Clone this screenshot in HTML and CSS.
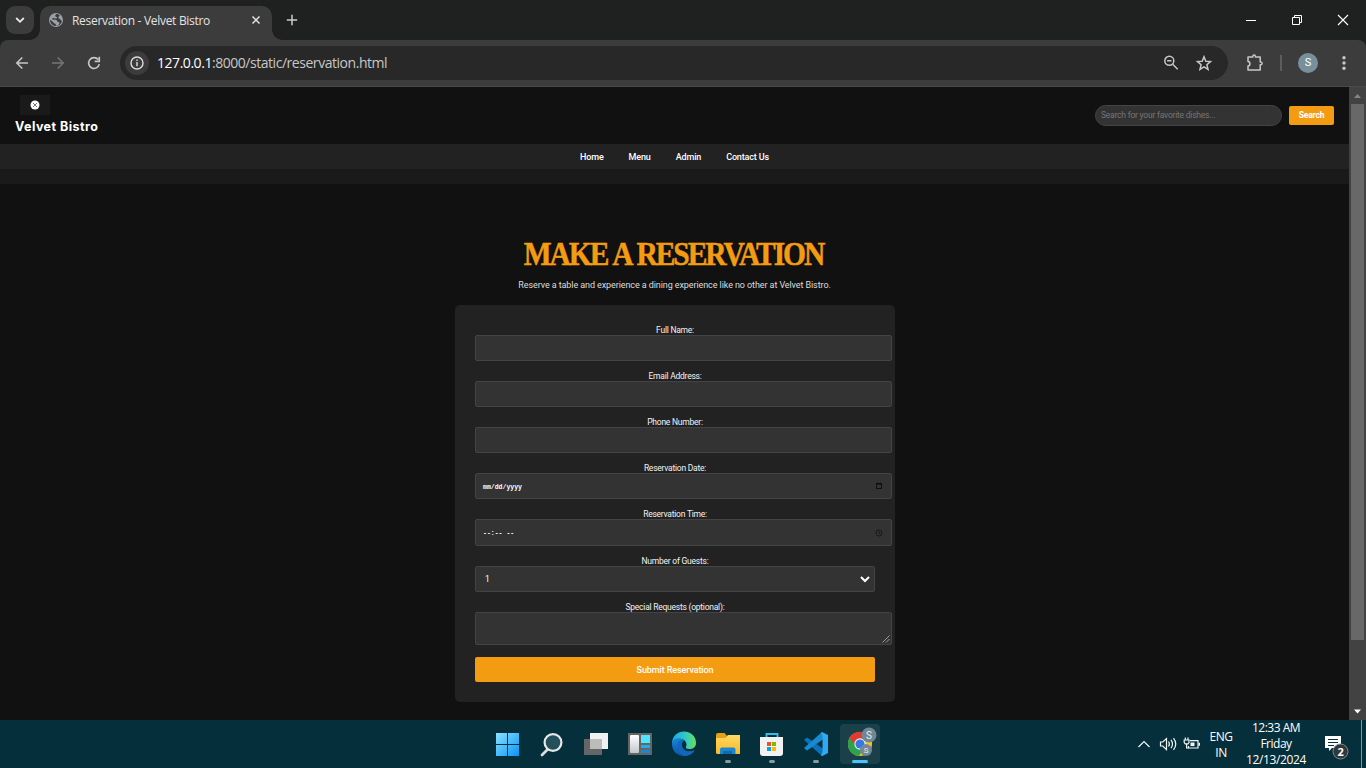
FILE: index.html
```html
<!DOCTYPE html>
<html lang="en">
<head>
<meta charset="utf-8">
<title>Reservation - Velvet Bistro</title>
<link rel="stylesheet" href="styles.css">
</head>
<body>
<div class="tabstrip">
  <div class="tabsearch"><svg width="28" height="28" viewBox="0 0 28 28"><path d="M10.2 12l3.8 3.8 3.8-3.8" fill="none" stroke="#e8e8e8" stroke-width="1.8"/></svg></div>
  <div class="tab">
    <svg class="globe" width="16" height="16" viewBox="0 0 16 16"><circle cx="8" cy="8" r="7" fill="#9aa0a8"/><path d="M9.500 1.800C7 2 6.500 4.400 8.500 5c1.500.6-.5 2-1.500 1.600L5 5.800 4 7.500l3.500.2c2.200.2 1.300 2 3 2.400 1.800.3.600 2.300-.2 3.100l-2.600.8.300-1.800L5.800 11 3.500 8.600 2 8c0 3.300 2.700 6 6 6 2.900 0 5.300-2 5.900-4.800L12 7l-1.700-.8.600-1.900 1-.7z" fill="#3c3c3c"/></svg>
    <span class="tabtitle">Reservation - Velvet Bistro</span>
    <svg class="tabclose" width="10" height="10" viewBox="0 0 10 10"><path d="M1.500 1.500l7 7m0-7l-7 7" stroke="#e3e3e3" stroke-width="1.500"/></svg>
  </div>
  <svg class="newtab" width="12" height="12" viewBox="0 0 12 12"><path d="M6 .8v10.400M.8 6h10.400" stroke="#c9c9c9" stroke-width="1.500"/></svg>
  <div class="wincontrols">
    <svg width="46" height="40" viewBox="0 0 46 40"><path d="M18 20.500h10" stroke="#fff"/></svg>
    <svg width="46" height="40" viewBox="0 0 46 40" fill="none" stroke="#fff"><path d="M18.500 17.500h7v7h-7zM20.500 17v-1.500h7v7H26"/></svg>
    <svg width="46" height="40" viewBox="0 0 46 40"><path d="M18 15l10 10m0-10L18 25" stroke="#fff" stroke-width="1.100"/></svg>
  </div>
</div>
<div class="toolbarwrap"><div class="toolbar">
  <svg width="106" height="46" viewBox="0 0 106 46" fill="none" stroke-width="1.600"><g stroke="#c7c7c7"><path d="M28 23H17M22.300 17.500L16.800 23l5.500 5.500"/><path d="M98.200 19.600a5.400 5.400 0 1 0 1.100 4.600M99.300 16.800v4.600h-4.600"/></g><path d="M52 23h11M57.700 17.500l5.500 5.500-5.500 5.500" stroke="#757575"/></svg>
  <div class="omnibox">
    <div class="info"><svg width="24" height="24" viewBox="0 0 24 24" fill="none" stroke="#dcdcdc" stroke-width="1.400"><circle cx="12" cy="12" r="6"/><path d="M12 11v4.200M12 8.400v1.500"/></svg></div>
    <span class="url">127.0.0.1<span class="path">:8000/static/reservation.html</span></span>
    <svg class="omni-icons" width="52" height="20" viewBox="0 0 52 20" fill="none" stroke="#c7c7c7" stroke-width="1.500"><circle cx="6.300" cy="7.800" r="4.500"/><path d="M4.100 7.800h4.400M9.700 11.200l5 5M41 3.800l1.800 4.400 4.700.4-3.600 3.100 1.100 4.600-4-2.500-4 2.500 1.100-4.600-3.600-3.100 4.700-.4z"/></svg>
  </div>
  <svg class="ext" width="18" height="18" viewBox="0 0 18 18"><path d="M2 3h4.800V2.400a1.300 1.300 0 0 1 2.600 0V3h4.800v5h.5a1.300 1.300 0 0 1 0 2.800h-.5V16H2v-4c2.600-.2 2.600-4.300 0-4.500z" fill="none" stroke="#c7c7c7" stroke-width="1.500" stroke-linejoin="round"/></svg>
  <span class="divider"></span>
  <span class="profile">S</span>
  <svg class="dots" width="6" height="18" viewBox="0 0 6 18" fill="#c7c7c7"><circle cx="3" cy="3.700" r="1.700"/><circle cx="3" cy="9" r="1.700"/><circle cx="3" cy="14.300" r="1.700"/></svg>
</div></div>
<div class="viewport">
  <div class="page">
    <header class="header">
      <div class="brand">
        <svg width="30" height="20" viewBox="0 0 30 20"><path d="M0 0h30v20H0z" fill="#1a1a1a"/><circle cx="15" cy="10" r="4.500" fill="#fff"/><path d="M13 8l4 4m0-4l-4 4" stroke="#555" stroke-width=".8"/></svg>
        <span class="brandname">Velvet Bistro</span>
      </div>
      <div class="searchform"><div class="searchbox">Search for your favorite dishes...</div><div class="searchbtn">Search</div></div>
    </header>
    <nav class="nav"><a>Home</a><a>Menu</a><a>Admin</a><a>Contact Us</a></nav>
    <div class="strip"></div>
    <main class="main">
      <h1 class="title">MAKE A RESERVATION</h1>
      <p class="lead">Reserve a table and experience a dining experience like no other at Velvet Bistro.</p>
      <form class="card">
        <label class="label">Full Name:</label><div class="input"></div>
        <label class="label">Email Address:</label><div class="input"></div>
        <label class="label">Phone Number:</label><div class="input"></div>
        <label class="label">Reservation Date:</label><div class="input"><span class="mono">mm/dd/yyyy</span><svg width="8" height="8" viewBox="0 0 8 8"><path d="M1.500 1.500h5v5h-5z" fill="none" stroke="#080808" stroke-width=".8"/><path d="M1.500 2h5M2.500.7v1M5.500.7v1" stroke="#080808"/></svg></div>
        <label class="label">Reservation Time:</label><div class="input time"><span class="mono">--:-- --</span><svg width="8" height="8" viewBox="0 0 8 8"><path d="M4 2v2.200l1.500.8M7 4a3 3 0 1 1-6 0a3 3 0 1 1 6 0z" fill="none" stroke="#161616" stroke-width=".9"/></svg></div>
        <label class="label">Number of Guests:</label><div class="input select"><span>1</span><svg width="10" height="8" viewBox="0 0 10 8"><path d="M1 2l4 4 4-4" fill="none" stroke="#fff" stroke-width="2"/></svg></div>
        <label class="label">Special Requests (optional):</label><div class="input area"><svg width="8" height="8" viewBox="0 0 8 8"><path d="M.5 7.500l7-7M4 7.500L7.500 4" stroke="#b5b5b5" stroke-width=".8"/></svg></div>
        <div class="submit">Submit Reservation</div>
      </form>
    </main>
  </div>
  <div class="scrollbar">
    <svg width="17" height="17" viewBox="0 0 17 17"><path d="M5 11l3.500-4 3.500 4z" fill="#858585"/></svg>
    <div class="thumb"></div>
    <svg width="17" height="17" viewBox="0 0 17 17"><path d="M5 6.500h7l-3.500 4z" fill="#fff"/></svg>
  </div>
</div>
<div class="taskbar">
  <div class="apps">
    <div class="app"><svg width="40" height="40" viewBox="0 0 40 40"><defs><linearGradient id="win" gradientUnits="userSpaceOnUse" x1="9" y1="9" x2="32" y2="32"><stop stop-color="#8be3ff"/><stop offset="1" stop-color="#0794f5"/></linearGradient></defs><path d="M9 9h11v11H9zM21 9h11v11H21zM9 21h11v11H9zM21 21h11v11H21z" fill="url(#win)"/></svg></div>
    <div class="app"><svg width="40" height="40" viewBox="0 0 40 40"><path d="M16.500 25.500l-5.500 5.500" stroke="#ddd" stroke-width="2.800" stroke-linecap="round"/><circle cx="22" cy="18.500" r="8.400" fill="#24505b" stroke="#e7e9e9" stroke-width="2.200"/></svg></div>
    <div class="app"><svg width="40" height="40" viewBox="0 0 40 40"><path d="M14 9h18v16H14z" fill="#f0f0f0"/><path d="M8 15h18v16H8z" fill="#666"/><path d="M14 15h12v10H14z" fill="#bcbcbc"/></svg></div>
    <div class="app"><svg width="40" height="40" viewBox="0 0 40 40"><defs><linearGradient id="wid" x2="0" y2="1"><stop stop-color="#fff"/><stop offset="1" stop-color="#c3c7c9"/></linearGradient></defs><path d="M8 9h24v22H8z" fill="#656565"/><rect x="10" y="11" width="9" height="18" rx="1" fill="url(#wid)"/><path d="M21 11h9v8h-9z" fill="#4de5ff"/><path d="M21 21h9v3h-9z" fill="#27a9e5"/><path d="M21 26h9v3h-9z" fill="#1688dc"/></svg></div>
    <div class="app"><svg width="40" height="40" viewBox="0 0 40 40"><defs><linearGradient id="edge"><stop stop-color="#1ba8e8"/><stop offset=".55" stop-color="#31c9c6"/><stop offset="1" stop-color="#66e05b"/></linearGradient><linearGradient id="edge2" x2="0" y2="1"><stop stop-color="#1686da"/><stop offset="1" stop-color="#0b53a8"/></linearGradient></defs><path d="M8 20C8 3 32 4 32 19c0 4-3 6-6.500 6-3 0-4-1-3.500-2 2-4-2-9-7-8-4 .8-6 3-7 5z" fill="url(#edge)"/><path d="M8 20c0 7 5 12 12 12 5 0 8.500-2.500 10.500-6-5 2.500-11 1.500-12.500-4-.6-2.500.3-4.500 2-5.500C15 12 8 15 8 20z" fill="url(#edge2)"/><path d="M14 19c-2 5 1 12 7 12.900 4 0 7.500-2 9.500-5.400-6 2.500-13 .5-13-5.500 0-2 1-3.500 2.500-4.500-2.500-1-5 0-6 2.500z" fill="#1267bd"/></svg></div>
    <div class="app"><svg width="40" height="40" viewBox="0 0 40 40"><defs><linearGradient id="fold" x2="0" y2="1"><stop stop-color="#ffd863"/><stop offset="1" stop-color="#f8b928"/></linearGradient></defs><path d="M8 11q0-2 2-2h6.500l2.500 3-2 3H8z" fill="#e6a012"/><path d="M8 14h9l3-3h12v19H9l-1-1z" fill="url(#fold)"/><path d="M12 30v-4.500q0-2 2-2h11.500q2 0 2 2V30z" fill="#1c87d0"/><path d="M15 27h9v3h-9z" fill="#126aae"/></svg><i class="run"></i></div>
    <div class="app"><svg width="40" height="40" viewBox="0 0 40 40"><path d="M14.500 15v-5h11v5" fill="none" stroke="#35bce9" stroke-width="1.900"/><path d="M8 13h23v16q0 3-3 3H11q-3 0-3-3z" fill="#f2f2f2"/><path d="M15 18h4v4h-4z" fill="#f25022"/><path d="M20 18h4v4h-4z" fill="#7fba00"/><path d="M15 23h4v4h-4z" fill="#00a4ef"/><path d="M20 23h4v4h-4z" fill="#ffb900"/></svg><i class="run"></i></div>
    <div class="app"><svg width="40" height="40" viewBox="0 0 40 40"><path d="M8 16l3-2.500L29 26l-3 6z" fill="#0b72ba"/><path d="M8 24l3 2.500L29 14l-3-6z" fill="#168bd2"/><path d="M26 8l6 3v18l-6 3.200-1-1.200 1.500-3V12L25 9z" fill="#2fa9f0"/></svg><i class="run"></i></div>
    <div class="app active"><svg width="40" height="40" viewBox="0 0 40 40"><circle cx="20" cy="20" r="12" fill="#f6c42c"/><path d="M20 20L9.500 14A12 12 0 0 0 19 32l5.500-9z" fill="#2ba24c"/><path d="M9.500 14A12 12 0 0 1 30.500 14L27 16l-7-1-5 6z" fill="#df3b31"/><circle cx="20" cy="20" r="5.700" fill="#f4f4f4"/><circle cx="20" cy="20" r="4.600" fill="#3478e5"/><circle cx="29" cy="11" r="7.500" fill="#708893"/><circle cx="26" cy="26" r="6" fill="#748994"/><text class="badge1" x="29" y="14.600">S</text><text class="badge2" x="26" y="29">S</text></svg><i class="run on"></i></div>
  </div>
  <div class="tray">
    <svg width="64" height="20" viewBox="0 0 64 20" fill="none" stroke="#f2f5f5" stroke-width="1.200"><path d="M1.500 13l5.500-5.500 5.500 5.500"/><path d="M23.500 8h2.300l3.700-3.400v11L25.800 12h-2.300zM31.500 7.500q1.800 2.500 0 5M34 5.800q3 4.200 0 8.400M36.500 4.200q4.500 5.800 0 11.600"/><path d="M53 6.600h8v7.400h-9.500v-2M62.400 8.800v3"/><path d="M48.300 3.500v2.200m2.700-2.200v2.200M47.200 6h4.800v2.500l-1 1.300h-2.800l-1-1.300zM49.600 10v4h2"/><path d="M53.500 8.500h4v3.600h-4z" fill="#f2f5f5" stroke="none"/></svg>
    <div class="lang"><span>ENG</span><span>IN</span></div>
    <div class="clock"><span>12:33 AM</span><span>Friday</span><span>12/13/2024</span></div>
    <svg class="notice" width="26" height="26" viewBox="0 0 26 26"><path d="M1 2h16v12H8l-3 3v-3H1z" fill="#fff"/><path d="M4 5.500h10M4 8.500h10M4 11.500h6" stroke="#05313c" stroke-width="1.100"/><circle cx="16.500" cy="17.500" r="7.500" fill="#30383b" stroke="#7f8a8d"/><text class="count" x="16.500" y="21.500">2</text></svg>
    <i class="edge"></i>
  </div>
</div>
</body>
</html>
```
FILE: styles.css
```css
* { box-sizing: border-box; }
body { margin: 0; width: 1366px; height: 768px; overflow: hidden; background: #111; color: #fff; font-family: Roboto, "Liberation Sans", sans-serif; }
svg { display: block; flex: none; }
.tabstrip { height: 40px; background: #1f2120; display: flex; }
.tabsearch { width: 28px; height: 28px; margin: 6px 6px 0; border-radius: 9px; background: #3c3c3c; }
.tab { position: relative; width: 232px; height: 34px; margin-top: 6px; padding: 0 11px 6px 8px; border-radius: 10px 10px 0 0; background: #3c3c3c; display: flex; align-items: center; }
.tab::before, .tab::after { content: ""; position: absolute; bottom: 0; width: 10px; height: 10px; }
.tab::before { left: -10px; background: radial-gradient(circle at 0 0, transparent 9.500px, #3c3c3c 10px); }
.tab::after { right: -10px; background: radial-gradient(circle at 100% 0, transparent 9.500px, #3c3c3c 10px); }
.tabtitle { margin-left: 8px; padding-top: 1px; font: 12px "Open Sans", sans-serif; letter-spacing: -.3px; color: #e3e3e3; white-space: nowrap; }
.tabclose { margin-left: auto; }
.newtab { margin: 14px 0 0 14px; }
.wincontrols { margin-left: auto; display: flex; }
.toolbarwrap { background: #1f2120; }
.toolbar { height: 47px; background: #3c3c3c; border-bottom: 1px solid #4a4a4a; border-radius: 8px 8px 0 0; display: flex; align-items: center; }
.omnibox { margin-left: 14px; width: 1108px; height: 34px; border-radius: 17px; background: #282828; display: flex; align-items: center; padding: 0 14px 0 5px; }
.info { width: 24px; height: 24px; border-radius: 50%; background: #3c3c3c; }
.url { margin-left: 8px; font: 14px/20px "Open Sans", sans-serif; letter-spacing: -.46px; color: #fff; white-space: nowrap; }
.path { color: #c7c7c7; }
.omni-icons { margin-left: auto; margin-right: -1px; }
.ext { margin-left: 18px; }
.divider { width: 2px; height: 16px; background: #5c5c5c; margin-left: 16px; }
.profile { width: 20px; height: 20px; margin-left: 16px; border-radius: 50%; background: #78909c; text-align: center; font-size: 11px; line-height: 20px; }
.dots { margin-left: 23px; }
.viewport { height: 633px; display: flex; }
.page { width: 1349px; background: #111; }
.header { height: 57px; padding: 0 15px; display: flex; justify-content: space-between; }
.brand { padding-top: 8px; }
.brand svg { margin-left: 5px; }
.brandname { display: block; font: 700 12.500px/20px Inter, sans-serif; letter-spacing: .45px; margin-top: 2px; white-space: nowrap; }
.searchform { display: flex; align-items: center; gap: 7px; }
.searchbox { width: 187px; height: 21px; border: 1px solid #444; border-radius: 11px; background: #333; padding-left: 5px; color: #757575; font-size: 8.500px; letter-spacing: -.22px; line-height: 19px; }
.searchbtn { width: 45px; height: 19px; border-radius: 2px; background: #f39c12; text-align: center; font-size: 8.500px; font-weight: 700; letter-spacing: -.2px; line-height: 19px; }
.nav { height: 25px; padding-top: 1px; background: #222; display: flex; justify-content: center; gap: 25px; font-size: 9px; font-weight: 500; line-height: 25px; letter-spacing: -.15px; }
.strip { height: 15px; background: #1a1a1a; }
.main { padding-top: 49px; text-align: center; }
.title { margin: 0 2px 0 0; height: 41px; font: 700 34.500px/40px "Liberation Serif", serif; letter-spacing: -2.400px; word-spacing: 1.500px; color: #f39c12; -webkit-text-stroke: .5px #f39c12; white-space: nowrap; transform: scaleX(.855); }
.lead { margin: 4px 0 0; height: 14px; font-size: 9px; line-height: 14px; letter-spacing: -.09px; color: #ddd; }
.card { width: 440px; height: 397px; margin: 13px 0 0 455px; padding: 20px; border-radius: 5px; background: #222; }
.label { display: block; height: 10px; font-size: 8.500px; letter-spacing: -.24px; line-height: 11px; color: #f2f2f2; }
.input { width: 417px; height: 26px; margin-bottom: 10px; padding: 0 8px 0 7px; border: 1px solid #444; border-radius: 2px; background: #333; display: flex; align-items: center; justify-content: space-between; font-size: 8.500px; }
.mono { padding-top: 2px; font: 700 6.500px "Liberation Mono", monospace; white-space: pre; }
.time { height: 27px; }
.select { width: 400px; padding: 0 4px 0 9px; }
.area { height: 33px; margin-bottom: 12px; padding: 0 1px 1px; align-items: flex-end; justify-content: flex-end; }
.submit { height: 25px; border-radius: 2px; background: #f39c12; font-size: 9px; font-weight: 500; line-height: 26px; letter-spacing: -.1px; }
.scrollbar { width: 17px; background: #424242; }
.thumb { width: 13px; height: 536px; margin: 0 0 63px 2px; background: #686868; }
.scrollbar { display: flex; flex-direction: column; justify-content: space-between; }
.thumb { margin-bottom: auto; }
.taskbar { height: 48px; background: #052f3a; display: flex; }
.apps { display: flex; gap: 4px; padding: 4px 0 0 487px; }
.app { width: 40px; height: 40px; border-radius: 4px; position: relative; }
.app:nth-child(n+3) { left: 1px; }
.active { background: #1b404a; }
.run { position: absolute; left: 17px; bottom: 1px; width: 6px; height: 3px; border-radius: 2px; background: #8a9a9e; }
.on { left: 12px; width: 16px; background: #4cc2ff; }
.badge1, .badge2 { font: 10px Roboto, sans-serif; text-anchor: middle; fill: #e7edef; }
.badge2 { font-size: 8px; }
.tray { margin-left: auto; display: flex; align-items: center; font: 12px/16px "Open Sans", sans-serif; letter-spacing: -.2px; text-align: center; }
.lang { width: 34px; margin-left: 3px; margin-right: 1px; padding-top: 1px; display: flex; flex-direction: column; letter-spacing: -.4px; }
.lang span, .clock span { white-space: nowrap; }
.clock { width: 70px; margin-left: 2px; margin-right: 1px; display: flex; flex-direction: column; letter-spacing: -.5px; }
.clock span:last-child { letter-spacing: -.35px; }
.notice { margin: 5px 0 0 12px; }
.count { font: 700 11px "Open Sans", sans-serif; text-anchor: middle; fill: #fff; }
.edge { width: 1px; height: 48px; margin: 0 4px 0 11px; background: #81979c; }
```
